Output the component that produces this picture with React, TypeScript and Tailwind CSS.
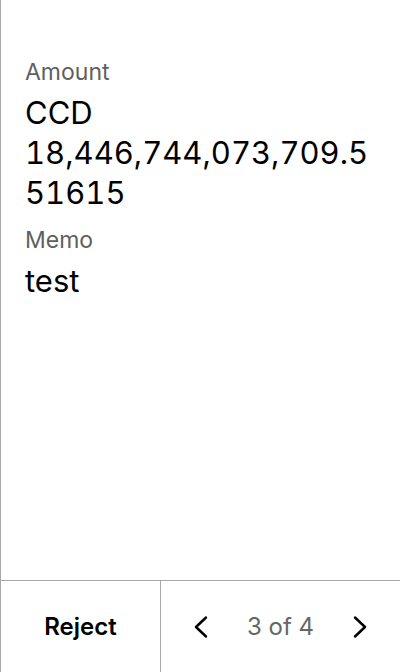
export default function App() {
  return (
    <div
      className="flex h-[672px] w-[400px] flex-col border-l border-[#a8a8a8] bg-white text-black"
      style={{ fontFamily: 'Inter, "Noto Sans", sans-serif' }}
    >
      {/* Details */}
      <div className="flex-1 pr-6 pl-6 pt-[58px]">
        <div className="text-[23px] leading-[28px] text-[#5f5f5f]">Amount</div>
        <div className="mt-[7px] text-[31px] leading-[40px] tabular-nums break-words">CCD 18,446,744,073,709.551615</div>
        <div className="mt-[13px] text-[23px] leading-[28px] text-[#5f5f5f]">Memo</div>
        <div className="mt-[7px] text-[31px] leading-[40px] break-words">test</div>
      </div>

      {/* Footer */}
      <div className="flex h-[92px] border-t border-[#a8a8a8]">
        <button className="flex w-[160px] items-center justify-center border-r border-[#a8a8a8] text-[24px] font-semibold">
          Reject
        </button>
        <div className="flex flex-1 items-center justify-between px-6">
          <button className="flex h-10 w-8 items-center justify-center">
            <svg width="16" height="24" viewBox="0 0 16 24" fill="none" stroke="#000" strokeWidth="2.5" strokeLinecap="round" strokeLinejoin="round">
              <path d="M13 2.5 L3 12 L13 21.5" />
            </svg>
          </button>
          <span className="text-[24px] text-[#666]">3 of 4</span>
          <button className="flex h-10 w-8 items-center justify-center">
            <svg width="16" height="24" viewBox="0 0 16 24" fill="none" stroke="#000" strokeWidth="2.5" strokeLinecap="round" strokeLinejoin="round">
              <path d="M3 2.5 L13 12 L3 21.5" />
            </svg>
          </button>
        </div>
      </div>
    </div>
  );
}
